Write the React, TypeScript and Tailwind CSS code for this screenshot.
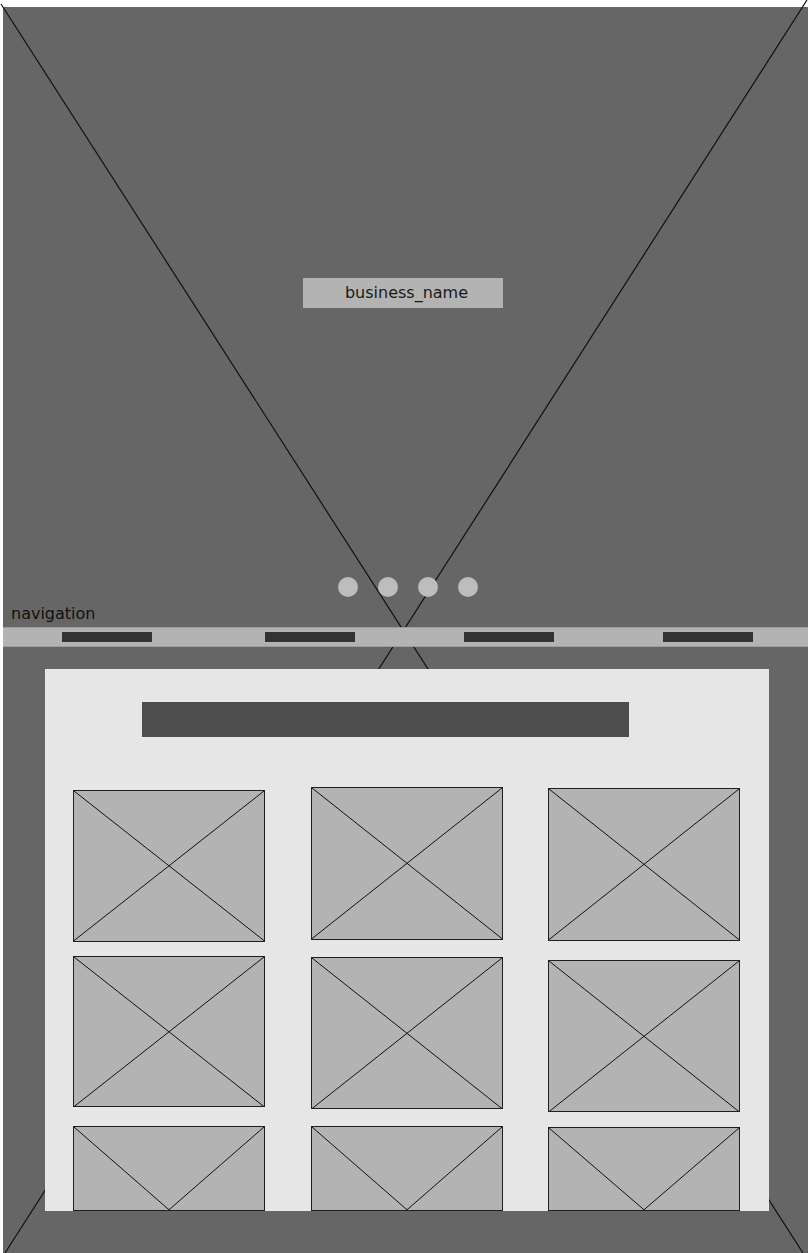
const font = { fontFamily: '"DejaVu Sans", Verdana, sans-serif' };

// placeholder image box with a cross (or a V when the box is cut off)
const Placeholder = ({ h, cut = false, className = "" }: { h: string; cut?: boolean; className?: string }) => (
  <div className={`relative w-[192px] ${h} bg-[#b3b3b3] border border-[#1f1f1f] ${className}`}>
    <svg className="absolute inset-0 w-full h-full" viewBox="0 0 100 100" preserveAspectRatio="none">
      {cut ? (
        <>
          <line x1="0" y1="0" x2="50" y2="100" stroke="#111" strokeWidth="1" vectorEffect="non-scaling-stroke" />
          <line x1="100" y1="0" x2="50" y2="100" stroke="#111" strokeWidth="1" vectorEffect="non-scaling-stroke" />
        </>
      ) : (
        <>
          <line x1="0" y1="0" x2="100" y2="100" stroke="#111" strokeWidth="1" vectorEffect="non-scaling-stroke" />
          <line x1="100" y1="0" x2="0" y2="100" stroke="#111" strokeWidth="1" vectorEffect="non-scaling-stroke" />
        </>
      )}
    </svg>
  </div>
);

export default function App() {
  return (
    <div className="w-[810px] h-[1253px] bg-white overflow-hidden" style={font}>
      <div className="relative ml-[3px] mt-[7px] w-[805px] h-[1246px] bg-[#666666]">
        {/* hero image placeholder cross */}
        <svg
          className="absolute -top-[7px] -left-[3px] w-[810px] h-[1253px] overflow-visible"
          viewBox="0 0 810 1253"
        >
          <line x1="1" y1="4" x2="803" y2="1253" stroke="#111" strokeWidth="1.2" />
          <line x1="807" y1="0" x2="5" y2="1253" stroke="#111" strokeWidth="1.2" />
        </svg>

        <div className="relative flex flex-col">
          {/* Nome do negócio */}
          <div className="mt-[271px] ml-[300px] w-[200px] h-[30px] pl-[7px] bg-[#b3b3b3] flex items-center justify-center text-[16px] text-[#1a1a1a]">
            business_name
          </div>

          {/* indicadores do carrossel */}
          <div className="mt-[269px] ml-[335px] flex gap-[20px]">
            <span className="w-[20px] h-[20px] rounded-full bg-[#bdbdbd]" />
            <span className="w-[20px] h-[20px] rounded-full bg-[#bdbdbd]" />
            <span className="w-[20px] h-[20px] rounded-full bg-[#bdbdbd]" />
            <span className="w-[20px] h-[20px] rounded-full bg-[#bdbdbd]" />
          </div>

          <div className="mt-[7px] ml-[8px] text-[16px] leading-[19px] text-[#111]">navigation</div>

          {/* barra de navegação */}
          <div className="mt-[4px] h-[20px] bg-[#b3b3b3] border-y border-[#9c9c9c] flex items-center">
            <span className="ml-[59px] w-[90px] h-[10px] bg-[#333333]" />
            <span className="ml-[113px] w-[90px] h-[10px] bg-[#333333]" />
            <span className="ml-[109px] w-[90px] h-[10px] bg-[#333333] -mt-[1px]" />
            <span className="ml-[109px] w-[90px] h-[10px] bg-[#333333]" />
          </div>

          {/* painel de conteúdo */}
          <div className="mt-[22px] ml-[42px] w-[724px] h-[542px] bg-[#e6e6e6] overflow-hidden">
            <div className="mt-[33px] ml-[97px] w-[487px] h-[35px] bg-[#4d4d4d]" />

            <div className="flex ml-[28px] h-[474px]">
              <div className="flex flex-col">
                <Placeholder h="h-[152px]" className="mt-[53px]" />
                <Placeholder h="h-[152px]" className="mt-[14px]" />
                <Placeholder h="h-[85px]" cut className="mt-[19px]" />
              </div>
              <div className="flex flex-col ml-[46px]">
                <Placeholder h="h-[153px]" className="mt-[50px]" />
                <Placeholder h="h-[153px]" className="mt-[17px]" />
                <Placeholder h="h-[85px]" cut className="mt-[17px]" />
              </div>
              <div className="flex flex-col ml-[45px]">
                <Placeholder h="h-[153px]" className="mt-[51px]" />
                <Placeholder h="h-[153px]" className="mt-[19px]" />
                <Placeholder h="h-[84px]" cut className="mt-[15px]" />
              </div>
            </div>
          </div>
        </div>
      </div>
    </div>
  );
}
